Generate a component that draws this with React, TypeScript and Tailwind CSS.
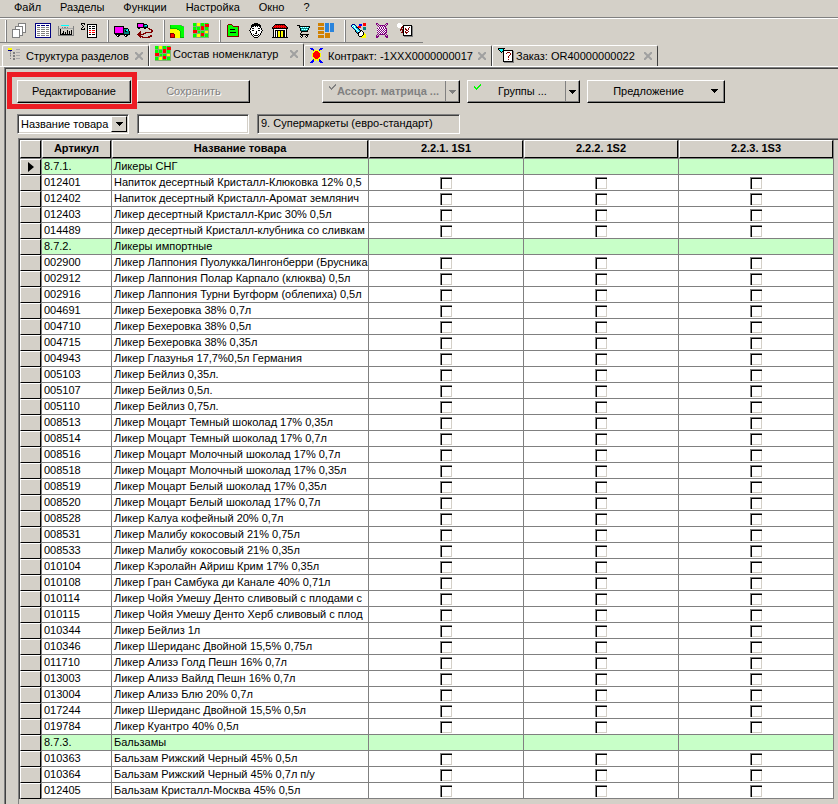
import React, { useState } from 'react';

type Row = { code: string; name: string; group?: boolean };

const PALETTE: Record<string, string> = {
  k: '#000000',
  w: '#ffffff',
  g: '#808080',
  l: '#a8a8a8',
  n: '#000080',
  B: '#0000ff',
  r: '#ff0000',
  R: '#800000',
  y: '#ffff00',
  m: '#ff00ff',
  t: '#008080',
  c: '#00ffff',
  G: '#00ff00',
  D: '#00c000',
  e: '#80b070',
  p: '#800080',
  o: '#d08000',
  s: '#2a84dc',
};

// 16x16 bitmaps, one character per pixel
const ICONS: Record<string, string[]> = {
  pages: [
    '......gggggggg..',
    '......gwwwwwwg..',
    '......gwwwwwwg..',
    '...ggggggggwwg..',
    '...gwwwwwwgwwg..',
    '...gwwwwwwgwwg..',
    'ggggggggwwgwwg..',
    'gwwwwwwgwwgwwg..',
    'gwwwwwwgwwgwwg..',
    'gwwwwwwgwwgggg..',
    'gwwwwwwgwwg.....',
    'gwwwwwwgwwg.....',
    'gwwwwwwgggg.....',
    'gwwwwwwg........',
    'gggggggg........',
  ],
  list: [
    'nnnnnnnnnnnnnnnn',
    'nwwwwwwwwwwwwwwn',
    'nwnnnwnnnnwnnnwn',
    'nwwwwwwwwwwwwwwn',
    'nwgggwggggwgggwn',
    'nwwwwwwwwwwwwwwn',
    'nwgggwggggwgggwn',
    'nwwwwwwwwwwwwwwn',
    'nwgggwggggwgggwn',
    'nwwwwwwwwwwwwwwn',
    'nwgggwggggwgggwn',
    'nwwwwwwwwwwwwwwn',
    'nwgggwggggwgggwn',
    'nwwwwwwwwwwwwwwn',
    'nnnnnnnnnnnnnnnn',
  ],
  register: [
    '................',
    '................',
    '...cccccccc.....',
    'g..............g',
    'g...g.gg.g.....g',
    'gllllllllllllllg',
    'g.k............g',
    'g.k......k...k.g',
    'g.k..k...k.k.k.g',
    'g.k..k.k.k.k.k.g',
    'g.k.kk.k.k.k.k.g',
    'g.kkkkkkkkkkkk.g',
    'gggggggggggggggg',
  ],
  sigma: [
    'kkkk............',
    'k..k..kkkkkkkkkk',
    '.k....kwwwwwwwwk',
    '..k...kwkkwkkkwk',
    '.k....kwwwwwwwwk',
    'k..k..kwkkwkkkwk',
    'kkkk..kwwwwwwwwk',
    '......kwrrwrrrwk',
    '......kwwwwwwwwk',
    '......kwrrwrrrwk',
    '......kwwwwwwwwk',
    '......kwkkwkkkwk',
    '......kwwwwwwwwk',
    '......kwwwwwwwwk',
    '......kkkkkkkkkk',
  ],
  truck: [
    '................',
    '................',
    '................',
    'kkkkkkkkkk......',
    'kmmmmmmmmk......',
    'kmmmmmmmmkkkkk..',
    'kmmmmmmmmktttck.',
    'kmmmmmmmmktkcck.',
    'kmmmmmmmmktkkttk',
    'kmmmmmmmmktttttk',
    'kkkkkkkkkktttttk',
    '.kkkkkkkkkkkkkkk',
    '..kwkk....kwkk..',
    '...kk......kk...',
  ],
  route: [
    'kkkkkkk.........',
    'kmmmmmkkkk......',
    'kmmmmmktcck.....',
    'kmmmmmktttk.....',
    'kkkkkkkkkkk.....',
    '.kk....kk..RR...',
    '............RRR.',
    '..............RR',
    '...R..........RR',
    '..RR....RRRRRRR.',
    '.RRR..RRR.......',
    'RRRRRRR.........',
    '.RRR.........RR.',
    '..RRRR.....RRRR.',
    '...R.RRRRRRRR...',
  ],
  zone: [
    '................',
    '................',
    'DGGGGGGGGGGg....',
    'DGGGGGGGGGGGGg..',
    'DGGGGGGGGGGGGG..',
    'DDDDDDDGGGGGGG..',
    'yyyyyyyDDGGGGG..',
    'yyyyyyyyyDGGGG..',
    'yyyyyyyyyyDGGG..',
    'yyyyyyyyyyDGGG..',
    'RRRRyyyyyyDGGG..',
    'RrrrRyyyyyDGGG..',
    'RrrrRyyyyyDGGG..',
    'RrrrRyyyyyDGGG..',
    'RRRRRyyyyyDDDD..',
  ],
  matrix: [
    'GGGeyyyeGGGeGGGe',
    'GGGeyyyeGGGerrrr',
    'GGGeyyyeGGGerrrr',
    'eeeeeeeerrrerrrr',
    'GGGeGGGerrreGGGe',
    'GGGeGGGerrreGGGe',
    'GGGeGGGerrreGGGe',
    'rrrreeeeeeeeeeee',
    'rrrreGGeGGGeyyye',
    'rrrreGGeGGGeyyye',
    'eeeeeeeerrreeeee',
    'GGGeyyyerrreGGGe',
    'GGGeyyyerrreGGGe',
    'GGGeyyyeGGGeGGGe',
    'eeeeeeeeeeeeeeee',
  ],
  folder: [
    '................',
    '..RRRR..........',
    '.RGGGGR.........',
    '.RGGGGGRRRRRR...',
    '.RGGGGGGGGGGR...',
    '.RGGGGGGGGGGR...',
    '.RGGkkkkkGGGR...',
    '.RGGGGGGGGGGR...',
    '.RGGGGGGGGGGR...',
    '.RGGkkkkkkGGR...',
    '.RGGGGGGGGGGR...',
    '.RGGGGGGGGGGR...',
    '.RGGGGGGGGGGR...',
    '.RRRRRRRRRRRR...',
  ],
  face: [
    '.....kkkk.......',
    '...kkkkkkkk.....',
    '..kkkkkkkkkk....',
    '..kkkwkwkwkk....',
    '..kwwwwwwwwk....',
    '.kwkkwwwwkkwk...',
    '.kwwwwwwwwwwk...',
    'kwwkkwwwwkkwwk..',
    '.kwwwwwkwwwwk...',
    '.kwwwwwkwwwwk...',
    '..kwwwkkwwwk....',
    '..kwkwwwwkwk....',
    '...kwkkkkwk.....',
    '....kwwwwk......',
    '.....kkkk.......',
  ],
  shop: [
    '................',
    '...kkkkkkkkkk...',
    '..krRrRrRrRrRk..',
    '.krrrrrrrrrrrrk.',
    'krRrRrRrRrRrRrRk',
    'kkkkkkkkkkkkkkkk',
    '.kwwwwwwwwwwwwk.',
    '.kwkkkkkkkkkkwk.',
    '.kwkwkyykyykkwk.',
    '.kwkwkyykyykkwk.',
    '.kwkwkyykyykkwk.',
    '.kwkwkyykyykkwk.',
    '.kwkwkyykyykkwk.',
    '.kwkwkyykyykkwk.',
    'kkkkkkkkkkkkkkkk',
  ],
  cart: [
    '................',
    '................',
    '..kkk...........',
    '....kkkkkkkkkkk.',
    '....kcwcwcwcwck.',
    '.....ktttttttk..',
    '.....kcwcwcwck..',
    '.....kttttttk...',
    '......kkkkkkk...',
    '......k.........',
    '.....k..........',
    '.....kkkkkkkkk..',
    '......kk...kk...',
    '.....kwk..kwk...',
    '......k....k....',
  ],
  blocks: [
    'oooooo.ssss.ssss',
    'oooooo.ssss.ssss',
    'oooooo.ssss.ssss',
    '.......ssss.ssss',
    'oooooo.ssss.ssss',
    'oooooo.ssss.ssss',
    'oooooo.ssss.ssss',
    '.......ssss.ssss',
    'oooooo.ssss.ssss',
    'oooooo..........',
    'oooooo.ooooo....',
    '.......ooooo....',
    'oooooo.ooooo....',
    'oooooo.ooooo....',
    'oooooo.ooooo....',
  ],
  torch: [
    '............rrr.',
    '.nnn....BBB.rrr.',
    'ncwcn...BBB.rrr.',
    'nwcwcn.rrr......',
    '.ncwcnkrrr..ttt.',
    '..ncwcsk....ttt.',
    '...ncwcsk...ttt.',
    '....kcwcskk.....',
    '....kscwskwk....',
    '.....kskkwwwk...',
    '......kkwwwwky..',
    '.......kwwwwkyy.',
    '.......kwwwkyyy.',
    '........kkkyyyy.',
    '..........yyyyy.',
  ],
  knot: [
    '..pp........pp..',
    '..p.p......p.p..',
    '...p.pppppp.p...',
    '....pwpwpwpp....',
    '....wpwpwpwp....',
    '...pwpwpwpwpp...',
    '...wpwpwpwpwp...',
    '...pwpwpwpwpp...',
    '...wpwpwpwpwp...',
    '...pwpwpwpwpp...',
    '....pwpwpwpp....',
    '...p.pppppp.p...',
    '..p.p......p.p..',
    '..ppp......ppp..',
    '..pp........pp..',
  ],
  query: [
    '.www............',
    'wwwww...........',
    'wwwwwwkkkkkkkkk.',
    'wwwwwRkwwwwwwwkg',
    '.wwwRRkwwwwwRwkg',
    '....R.kwRwwRwwkg',
    '...RRRkwRRwRwwkg',
    '...R.RkwwRRwwwkg',
    '.....RkwRwwRwwkg',
    '....RRkwRRRwwwkg',
    '......kwwRwwwwkg',
    '......kwwwwwwwkg',
    '......kkkkkkkkkg',
    '.......ggggggggg',
  ],
  tree: [
    'yyyy............',
    'yyyy....llll....',
    'nnnn............',
    '..g.............',
    '..l..gg.llll....',
    '..g..gg.........',
    '..l.............',
    '..g..gg.llll....',
    '..l..gg.........',
    '................',
    '..g..gg.llll....',
    '.....gg.........',
  ],
  contract: [
    'BBB.......BBB...',
    '.BBB.....BBB....',
    '..yByyyyyBy.....',
    '...yyrrryy......',
    '...yrrrrry......',
    '..yrrrrrrry.....',
    '..yrrrrrrry.....',
    '..yrrrrrrry.....',
    '..yrrrrrrry.....',
    '...yrrrrry......',
    '...yyrrryy......',
    '..yByyyyyBy.....',
    '..BByy.yyBB.....',
    '.BBB.....BBB....',
    'BBB.......BBB...',
  ],
  order: [
    'kkkkkkk.........',
    'kcccck..........',
    '.kccckkkkkkkkkk.',
    '..kckkwwwwwwwwkg',
    '...k.kwwwRRRwwkg',
    '.....kwwRwwwRwkg',
    '.....kwwwwwwRwkg',
    '.....kwwwwwRwwkg',
    '.....kwwwwRwwwkg',
    '.....kwwwwRwwwkg',
    '.....kwwwwwwwwkg',
    '.....kwwwwRwwwkg',
    '.....kwwwwwwwwkg',
    '.....kkkkkkkkkkg',
    '......gggggggggg',
  ],
};

const PixelIcon: React.FC<{ name: string }> = ({ name }) => (
  <svg className="size-4 shrink-0" viewBox="0 0 16 16" shapeRendering="crispEdges" aria-hidden="true">
    {ICONS[name].flatMap((line, y) =>
      [...line].map((ch, x) =>
        PALETTE[ch] ? <rect key={`${x}-${y}`} x={x} y={y} width="1" height="1" fill={PALETTE[ch]} /> : null
      )
    )}
  </svg>
);

const MENU = ['Файл', 'Разделы', 'Функции', 'Настройка', 'Окно', '?'];

const TOOLS = [
  ['pages', 'list', 'register', 'sigma'],
  ['truck', 'route'],
  ['zone', 'matrix'],
  ['folder', 'face', 'shop', 'cart', 'blocks'],
  ['torch', 'knot', 'query'],
];

const TABS = [
  { icon: 'tree', title: 'Структура разделов', width: 'w-[147px]' },
  { icon: 'matrix', title: 'Состав номенклатур', width: 'w-[155px]', active: true },
  { icon: 'contract', title: 'Контракт: -1XXX0000000017', width: 'w-[188px]' },
  { icon: 'order', title: 'Заказ: OR40000000022', width: 'w-[166px]' },
];

const COLUMNS = ['2.2.1. 1S1', '2.2.2. 1S2', '2.2.3. 1S3'];

const ROWS: Row[] = [
  { code: '8.7.1.', name: 'Ликеры СНГ', group: true },
  { code: '012401', name: 'Напиток десертный Кристалл-Клюковка 12% 0,5' },
  { code: '012402', name: 'Напиток десертный Кристалл-Аромат землянич' },
  { code: '012403', name: 'Ликер десертный Кристалл-Крис 30% 0,5л' },
  { code: '014489', name: 'Ликер десертный Кристалл-клубника со сливкам' },
  { code: '8.7.2.', name: 'Ликеры импортные', group: true },
  { code: '002900', name: 'Ликер Лаппония ПуолуккаЛингонберри (Брусника' },
  { code: '002912', name: 'Ликер Лаппония Полар Карпало (клюква) 0,5л' },
  { code: '002916', name: 'Ликер Лаппония Турни Бугформ (облепиха) 0,5л' },
  { code: '004691', name: 'Ликер Бехеровка 38% 0,7л' },
  { code: '004710', name: 'Ликер Бехеровка 38% 0,5л' },
  { code: '004715', name: 'Ликер Бехеровка 38% 0,35л' },
  { code: '004943', name: 'Ликер Глазунья 17,7%0,5л Германия' },
  { code: '005103', name: 'Ликер Бейлиз 0,35л.' },
  { code: '005107', name: 'Ликер Бейлиз 0,5л.' },
  { code: '005110', name: 'Ликер Бейлиз 0,75л.' },
  { code: '008513', name: 'Ликер Моцарт Темный шоколад 17% 0,35л' },
  { code: '008514', name: 'Ликер Моцарт Темный шоколад 17% 0,7л' },
  { code: '008516', name: 'Ликер Моцарт Молочный шоколад 17% 0,7л' },
  { code: '008518', name: 'Ликер Моцарт Молочный шоколад 17% 0,35л' },
  { code: '008519', name: 'Ликер Моцарт Белый шоколад 17% 0,35л' },
  { code: '008520', name: 'Ликер Моцарт Белый шоколад 17% 0,7л' },
  { code: '008528', name: 'Ликер Калуа кофейный 20% 0,7л' },
  { code: '008531', name: 'Ликер Малибу кокосовый 21% 0,75л' },
  { code: '008533', name: 'Ликер Малибу кокосовый 21% 0,35л' },
  { code: '010104', name: 'Ликер Кэролайн Айриш Крим 17% 0,35л' },
  { code: '010108', name: 'Ликер Гран Самбука ди Канале 40% 0,71л' },
  { code: '010114', name: 'Ликер Чойя Умешу Денто сливовый с плодами с' },
  { code: '010115', name: 'Ликер Чойя Умешу Денто Херб сливовый с плод' },
  { code: '010344', name: 'Ликер Бейлиз 1л' },
  { code: '010346', name: 'Ликер Шериданс Двойной 15,5% 0,75л' },
  { code: '011710', name: 'Ликер Ализэ Голд Пешн 16% 0,7л' },
  { code: '013003', name: 'Ликер Ализэ Вайлд Пешн 16% 0,7л' },
  { code: '013004', name: 'Ликер Ализэ Блю 20% 0,7л' },
  { code: '017244', name: 'Ликер Шериданс Двойной 15,5% 0,5л' },
  { code: '019784', name: 'Ликер Куантро 40% 0,5л' },
  { code: '8.7.3.', name: 'Бальзамы', group: true },
  { code: '010363', name: 'Бальзам Рижский Черный 45% 0,5л' },
  { code: '010364', name: 'Бальзам Рижский Черный 45% 0,7л п/у' },
  { code: '012405', name: 'Бальзам Кристалл-Москва 45% 0,5л' },
];

const RAISED = 'border border-t-white border-l-white border-r-black border-b-black';
const BUTTON = 'h-[23px] flex items-center border border-t-white border-l-white border-r-black border-b-black shadow-[inset_-1px_-1px_0_#808080]';
const SUNKEN = 'border border-t-[#808080] border-l-[#808080] border-r-white border-b-white shadow-[inset_1px_1px_0_#404040,inset_-1px_-1px_0_#d4d0c8]';
const DISABLED = 'text-[#808080] [text-shadow:1px_1px_0_#fff]';

const DownArrow = () => (
  <svg className="w-[7px] h-1 shrink-0" viewBox="0 0 7 4" shapeRendering="crispEdges" fill="currentColor" aria-hidden="true">
    <path d="M0 0h7v1H0zM1 1h5v1H1zM2 2h3v1H2zM3 3h1v1H3z" />
  </svg>
);

const Check = () => (
  <svg className="absolute left-1.5 top-[3px] w-[7px] h-1.5" viewBox="0 0 7 6" shapeRendering="crispEdges" fill="currentColor" aria-hidden="true">
    <path d="M6 0h1v2H6zM5 1h1v2H5zM4 2h1v2H4zM3 3h1v2H3zM2 4h1v2H2zM1 3h1v2H1zM0 2h1v2H0z" />
  </svg>
);

const CloseMark = () => (
  <svg className="size-2" viewBox="0 0 8 8" aria-hidden="true">
    <path d="M0 0l8 8M8 0l-8 8" stroke="#a0a0a0" strokeWidth="2" />
  </svg>
);

const Toolbar = () => (
  <div className="flex items-center w-fit h-6 pl-[5px] border-b border-[#808080]">
    {TOOLS.map((group, i) => (
      <div key={i} className="flex items-center gap-[7px] pr-2.5">
        <span className="w-0.5 h-[22px] -mr-0.5 border-l border-white border-r border-r-[#808080]" />
        {group.map((name) => (
          <button key={name} aria-label={name} className="size-4">
            <PixelIcon name={name} />
          </button>
        ))}
      </div>
    ))}
  </div>
);

const Tabs = () => (
  <div className="flex items-end h-[23px] pl-0.5">
    {TABS.map((tab) => (
      <div
        key={tab.title}
        className={`${tab.width} ${tab.active ? 'h-[23px] pb-[3px]' : 'h-[21px]'} flex items-center gap-0.5 px-[5px] border-t border-l border-r border-t-white border-l-white border-r-[#404040] rounded-t-xs`}
      >
        <PixelIcon name={tab.icon} />
        <button className="flex-1 text-left whitespace-nowrap">{tab.title}</button>
        <button aria-label="Закрыть">
          <CloseMark />
        </button>
      </div>
    ))}
  </div>
);

const Commands = () => (
  <div className="flex items-center pl-[11px]">
    <div className="relative">
      <button className={`${BUTTON} w-[114px] pb-0.5 justify-center`}>Редактирование</button>
      <span className="absolute -left-2.5 -top-2 -right-1.5 -bottom-1.5 border-[5px] border-[#ed1c24] pointer-events-none" />
    </div>
    <button disabled className={`${BUTTON} ${DISABLED} ml-1.5 w-[113px] pb-0.5 justify-center`}>
      Сохранить
    </button>
    <div className={`${BUTTON} ${DISABLED} relative ml-[72px] w-[138px]`}>
      <Check />
      <button disabled className="flex-1 pl-2 pb-0.5 font-bold">Ассорт. матрица ...</button>
      <button disabled aria-label="Ассорт. матрица: список" className="w-[14px] h-full flex items-center justify-center border-l border-[#808080]">
        <DownArrow />
      </button>
    </div>
    <div className={`${BUTTON} relative ml-[7px] w-[113px]`}>
      <span className="text-[#00ff00]">
        <Check />
      </span>
      <button className="flex-1 pl-3 pb-0.5">Группы ...</button>
      <button aria-label="Группы: список" className="w-[14px] h-full flex items-center justify-center border-l border-[#808080]">
        <DownArrow />
      </button>
    </div>
    <button className={`${BUTTON} ml-[7px] w-[138px] pr-1.5 pb-0.5`}>
      <span className="flex-1 pr-0.5">Предложение</span>
      <DownArrow />
    </button>
  </div>
);

const Filters = () => {
  const [query, setQuery] = useState('');
  return (
    <div className="flex items-center gap-2 pl-[11px]">
      <div className={`${SUNKEN} relative w-28 h-5 bg-white`}>
        <select aria-label="Поле поиска" className="block w-full h-full pl-[3px] appearance-none outline-none">
          <option>Название товара</option>
          <option>Артикул</option>
        </select>
        <span className={`${RAISED} absolute right-px inset-y-px w-4 bg-[#d4d0c8] flex items-center justify-center pointer-events-none`}>
          <DownArrow />
        </span>
      </div>
      <input
        aria-label="Поиск"
        value={query}
        onChange={(e) => setQuery(e.target.value)}
        className={`${SUNKEN} w-28 h-5 px-1 bg-white outline-none`}
      />
      <div className={`${SUNKEN} w-[203px] h-5 px-[3px] leading-4`}>9. Супермаркеты (евро-стандарт)</div>
    </div>
  );
};

const HeaderCell: React.FC<{ children?: React.ReactNode }> = ({ children }) => (
  <th className="p-0 border-r border-b border-[#808080]">
    <div className={`${RAISED} h-[18px] leading-[14px] font-bold bg-[#d4d0c8]`}>{children}</div>
  </th>
);

const ProductGrid = () => {
  const [checked, setChecked] = useState<Record<string, boolean>>({});
  return (
    <table className="w-full table-fixed border-separate border-spacing-0">
      <colgroup>
        <col className="w-[22px]" />
        <col className="w-[70px]" />
        <col className="w-[257px]" />
        <col />
        <col />
        <col />
      </colgroup>
      <thead>
        <tr>
          <HeaderCell />
          <HeaderCell>Артикул</HeaderCell>
          <HeaderCell>Название товара</HeaderCell>
          {COLUMNS.map((c) => (
            <HeaderCell key={c}>{c}</HeaderCell>
          ))}
        </tr>
      </thead>
      <tbody>
        {ROWS.map((row, i) => {
          const cell = `p-0 border-r border-b border-[#808080] ${row.group ? 'bg-[#c8ffc8]' : 'bg-white'}`;
          return (
            <tr key={row.code}>
              <td className="p-0 border-r border-[#808080]">
                <div className={`${RAISED} h-4 flex items-center justify-center`}>
                  {i === 0 && (
                    <svg className="w-1.5 h-2.5" viewBox="0 0 6 10" aria-hidden="true">
                      <path d="M0 0l6 5L0 10z" />
                    </svg>
                  )}
                </div>
              </td>
              <td className={cell}>
                <div className="h-[15px] px-0.5 leading-[15px]">{row.code}</div>
              </td>
              <td className={cell}>
                <div className="h-[15px] pl-0.5 leading-[15px] whitespace-nowrap overflow-hidden">{row.name}</div>
              </td>
              {COLUMNS.map((c) => {
                const id = `${row.code}/${c}`;
                return (
                  <td key={c} className={cell}>
                    {!row.group && (
                      <input
                        type="checkbox"
                        aria-label={`${row.name} ${c}`}
                        checked={!!checked[id]}
                        onChange={() => setChecked({ ...checked, [id]: !checked[id] })}
                        className="block mx-auto mt-0.5 mb-px size-3 appearance-none bg-white checked:bg-black border-t border-l border-[#808080] shadow-[inset_1px_1px_0_#000,inset_-1px_-1px_0_#d4d0c8]"
                      />
                    )}
                  </td>
                );
              })}
            </tr>
          );
        })}
      </tbody>
    </table>
  );
};

const App: React.FC = () => (
  <div className="min-h-screen flex flex-col bg-[#d4d0c8] text-black text-[11px] leading-[14px] font-['Liberation_Sans',Arial,sans-serif]">
    <nav className="flex gap-[19px] h-[17px] pl-3.5">
      {MENU.map((item) => (
        <button key={item} className="h-[14px]">{item}</button>
      ))}
    </nav>
    <div className="border-t border-[#808080]">
      <div className="border-t border-white">
        <Toolbar />
      </div>
    </div>
    <Tabs />
    <div className="border-t border-white" />
    <main className="flex-1 flex flex-col ml-1 border-t border-l border-[#808080]">
      <div className="flex-1 flex flex-col gap-[11px] pt-[11px] border-t border-l border-[#404040]">
        <Commands />
        <Filters />
        <div className="flex-1 -mt-[7px] ml-3 border-t border-l border-[#808080]">
          <div className="h-full border-t border-l border-[#404040] pr-1">
            <ProductGrid />
          </div>
        </div>
      </div>
    </main>
  </div>
);

export default App;
